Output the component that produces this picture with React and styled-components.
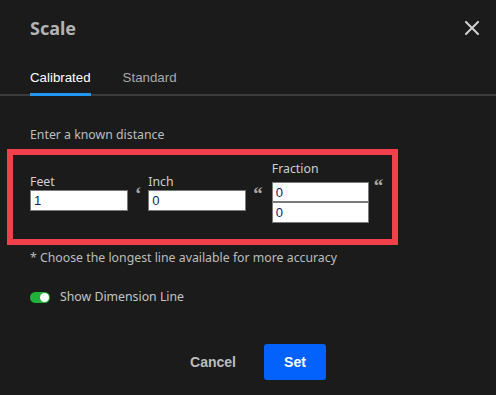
import React from 'react'
import styled, { createGlobalStyle } from 'styled-components'

const GlobalStyle = createGlobalStyle`
  html, body {
    margin: 0;
    padding: 0;
    background: #1b1b1b;
  }
  * { box-sizing: border-box; }
`

const Dialog = styled.div`
  width: 496px;
  height: 395px;
  background: #1b1b1b;
  font-family: "Noto Sans", sans-serif;
  overflow: hidden;
`

const Header = styled.div`
  display: flex;
  justify-content: space-between;
  align-items: center;
  height: 60px;
  padding: 0 17px 4px 30px;
`

const Title = styled.h2`
  margin: 0;
  font-size: 18px;
  line-height: 24px;
  font-weight: 700;
  color: #b3b3b3;
`

const CloseButton = styled.button`
  display: flex;
  padding: 0;
  border: 0;
  background: none;
  cursor: pointer;
`

const Tabs = styled.div`
  display: flex;
  gap: 32px;
  padding-left: 30px;
  border-bottom: 2px solid #3b3b3b;
`

const Tab = styled.div`
  padding: 10px 0 7px;
  margin-bottom: -2px;
  font-family: "Liberation Sans", Arial, sans-serif;
  font-size: 13.3px;
  line-height: 16px;
  color: ${({active}) => active ? '#ffffff' : '#a9a9a9'};
  border-bottom: 3px solid ${({active}) => active ? '#2196f3' : 'transparent'};
`

const Body = styled.div`
  padding: 0 30px;
`

const Hint = styled.p`
  margin: ${({margin}) => margin || '0'};
  font-size: 12.3px;
  line-height: 18px;
  color: #bdbdbd;
`

const Highlight = styled.div`
  display: flex;
  align-items: center;
  gap: 7px;
  width: 391px;
  margin: 5px 0 0 -23px;
  padding: 6px 0 16px 17px;
  border: 6px solid #f2404a;
`

const Field = styled.div`
  display: flex;
  flex-direction: column;
`

const Label = styled.label`
  font-size: 12.3px;
  line-height: 16px;
  color: #cfcfcf;
  margin-bottom: ${({gap}) => gap || '0'};
`

const FieldRow = styled.div`
  display: flex;
  align-items: flex-start;
  gap: ${({gap}) => gap || '7px'};
  padding-right: ${({trail}) => trail || '0'};
`

const Stack = styled.div`
  display: flex;
  flex-direction: column;
`

const Input = styled.input`
  width: ${({width}) => width || '98px'};
  height: ${({height}) => height || '21px'};
  padding: 0 3px;
  border: 1px solid #7a7a7a;
  background: #fff;
  font-family: "Liberation Sans", Arial, sans-serif;
  font-size: 13px;
  color: #16206a;
  outline: none;
`

const Quote = styled.span`
  font-family: "Liberation Serif", serif;
  font-size: 19px;
  font-weight: 700;
  line-height: 1;
  color: #a7a7a7;
  margin-top: -6px;
`

const ToggleRow = styled.div`
  display: flex;
  align-items: center;
  gap: 10px;
  margin-top: 21px;
`

const Toggle = styled.div`
  display: flex;
  justify-content: ${({on}) => on ? 'flex-end' : 'flex-start'};
  align-items: center;
  width: 20px;
  height: 11px;
  padding: 1px;
  border-radius: 6px;
  background: ${({on}) => on ? '#21b13a' : '#555'};
`

const Knob = styled.div`
  width: 9px;
  height: 9px;
  border-radius: 50%;
  background: #fff;
`

const ToggleLabel = styled.span`
  font-size: 12.3px;
  line-height: 18px;
  color: #c4c4c4;
`

const Actions = styled.div`
  display: flex;
  justify-content: center;
  align-items: center;
  gap: 14px;
  margin-top: 38px;
  padding-left: 6px;
`

const Button = styled.button`
  height: 36px;
  padding: 0 ${({primary}) => primary ? '20px' : '14px'};
  border: 0;
  border-radius: 3px;
  font-family: "Liberation Sans", Arial, sans-serif;
  font-size: 14px;
  font-weight: 700;
  color: ${({primary}) => primary ? '#fff' : '#bdbdbd'};
  background: ${({primary}) => primary ? '#0362fc' : 'transparent'};
  min-width: ${({primary}) => primary ? '62px' : '0'};
`

const CloseIcon = () => (
  <svg width="14" height="14" viewBox="0 0 14 14">
    <path d="M1 1 L13 13 M13 1 L1 13" stroke="#cfcfcf" strokeWidth="2" strokeLinecap="square" />
  </svg>
)

export default function App() {
  return (
    <>
      <GlobalStyle />
      <Dialog>
        <Header>
          <Title>Scale</Title>
          <CloseButton aria-label="Close"><CloseIcon /></CloseButton>
        </Header>
        <Tabs>
          <Tab active>Calibrated</Tab>
          <Tab>Standard</Tab>
        </Tabs>
        <Body>
          <Hint margin="30px 0 0">Enter a known distance</Hint>
          <Highlight>
            <Field>
              <Label>Feet</Label>
              <FieldRow>
                <Input defaultValue="1" />
                <Quote>‘</Quote>
              </FieldRow>
            </Field>
            <Field>
              <Label>Inch</Label>
              <FieldRow trail="2px">
                <Input defaultValue="0" />
                <Quote>“</Quote>
              </FieldRow>
            </Field>
            <Field>
              <Label gap="5px">Fraction</Label>
              <FieldRow gap="5px">
                <Stack>
                  <Input width="97px" height="20px" defaultValue="0" />
                  <Input width="97px" defaultValue="0" />
                </Stack>
                <Quote>“</Quote>
              </FieldRow>
            </Field>
          </Highlight>
          <Hint margin="4px 0 0">* Choose the longest line available for more accuracy</Hint>
          <ToggleRow>
            <Toggle on><Knob /></Toggle>
            <ToggleLabel>Show Dimension Line</ToggleLabel>
          </ToggleRow>
          <Actions>
            <Button>Cancel</Button>
            <Button primary>Set</Button>
          </Actions>
        </Body>
      </Dialog>
    </>
  )
}
